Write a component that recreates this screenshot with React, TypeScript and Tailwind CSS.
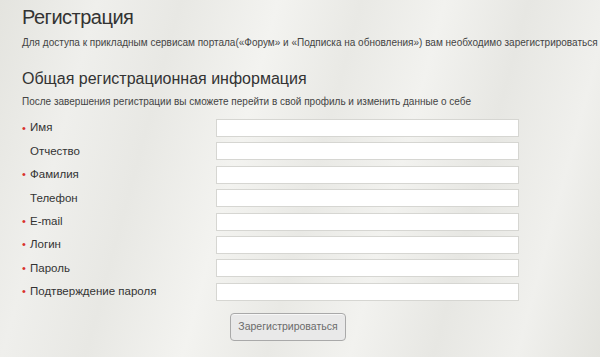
// Registration form — static recreation.

const FIELDS: { label: string; required: boolean; type?: string }[] = [
  { label: "Имя", required: true },
  { label: "Отчество", required: false },
  { label: "Фамилия", required: true },
  { label: "Телефон", required: false },
  { label: "E-mail", required: true },
  { label: "Логин", required: true },
  { label: "Пароль", required: true, type: "password" },
  { label: "Подтверждение пароля", required: true, type: "password" },
];

export default function App() {
  return (
    <div
      className="w-[600px] h-[357px] overflow-hidden pl-[22px] pt-[4px] text-[#3c3c3c] bg-[#ebebe7] bg-[linear-gradient(105deg,#e4e4df_0%,#efefec_14%,#e8e8e4_26%,#f3f3f0_40%,#e9e9e5_52%,#f2f2ef_64%,#e7e7e3_76%,#f0f0ed_88%,#e3e3de_100%)]"
      style={{ fontFamily: '"Liberation Sans", Arial, sans-serif' }}
    >
      {/* Page title */}
      <h1 className="text-[20px] leading-[26px] tracking-[-0.5px] text-[#333]">Регистрация</h1>
      <p className="mt-[6px] text-[10px] leading-[14px] text-[#444] whitespace-nowrap">
        Для доступа к прикладным сервисам портала(«Форум» и «Подписка на обновления») вам необходимо зарегистрироваться
      </p>

      {/* Section */}
      <h2 className="mt-[19px] text-[16px] leading-[20px] text-[#333]">Общая регистрационная информация</h2>
      <p className="mt-[6px] text-[10px] leading-[14px] text-[#444] whitespace-nowrap">
        После завершения регистрации вы сможете перейти в свой профиль и изменить данные о себе
      </p>

      <form className="mt-[10px]" onSubmit={(e) => e.preventDefault()}>
        <div className="flex flex-col gap-[5.4px]">
          {FIELDS.map((f) => (
            <div key={f.label} className="flex items-center">
              <label className="w-[194px] flex items-center text-[11.5px] text-[#333]">
                <span className="w-[7px] text-[#d9302c] text-[11px] leading-none">{f.required ? "•" : ""}</span>
                <span className="ml-[1px]">{f.label}</span>
              </label>
              <input
                type={f.type ?? "text"}
                className="w-[303px] h-[18px] bg-white border border-[#d6d6d2] outline-none text-[12px] px-1"
              />
            </div>
          ))}
        </div>

        <div className="mt-[12px] pl-[208px]">
          <button
            type="submit"
            className="w-[116px] h-[28px] rounded-[4px] border border-[#a9a9a9] bg-[#e9e9e9] text-[10.5px] text-[#6b6b6b] shadow-[inset_0_1px_0_#f7f7f7]"
          >
            Зарегистрироваться
          </button>
        </div>
      </form>
    </div>
  );
}
